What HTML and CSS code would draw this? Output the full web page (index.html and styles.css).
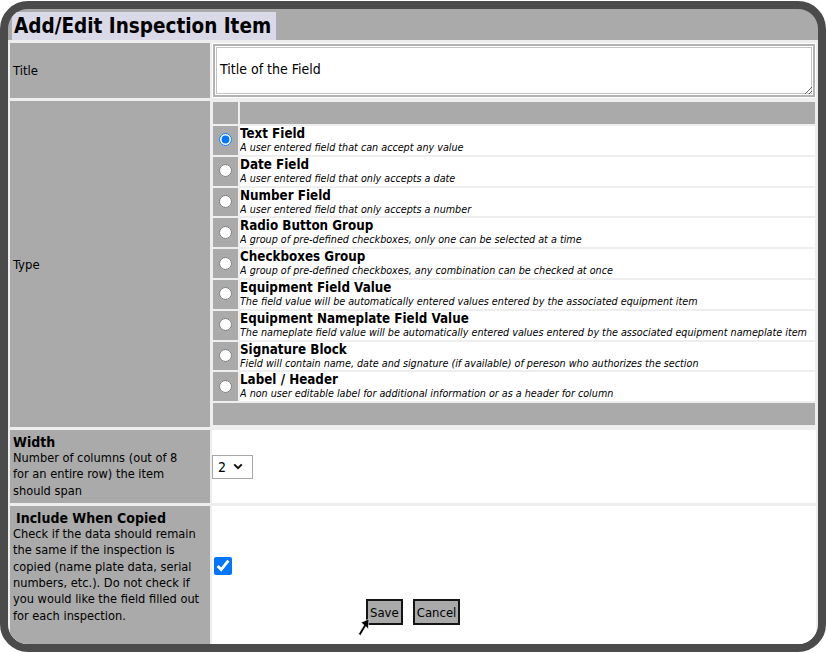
FILE: index.html
```html
<!DOCTYPE html>
<html>
<head>
<meta charset="utf-8">
<title>Add/Edit Inspection Item</title>
<link rel="stylesheet" href="styles.css">
</head>
<body>
<div class="frame">
  <h1 class="heading">Add/Edit Inspection Item</h1>
  <table class="form">
    <tr class="row-title">
      <th class="label">Title</th>
      <td class="value"><textarea class="title-input">Title of the Field</textarea></td>
    </tr>
    <tr class="row-type">
      <th class="label">Type</th>
      <td class="value">
        <table class="types">
          <tr class="bar"><td class="rcell"></td><td class="bar-fill"></td></tr>
          <tr><td class="rcell"><input class="radio" type="radio" name="type" checked></td><td class="opt"><div class="opt-name">Text Field</div><div class="opt-desc">A user entered field that can accept any value</div></td></tr>
          <tr><td class="rcell"><input class="radio" type="radio" name="type"></td><td class="opt"><div class="opt-name">Date Field</div><div class="opt-desc">A user entered field that only accepts a date</div></td></tr>
          <tr><td class="rcell"><input class="radio" type="radio" name="type"></td><td class="opt"><div class="opt-name">Number Field</div><div class="opt-desc">A user entered field that only accepts a number</div></td></tr>
          <tr><td class="rcell"><input class="radio" type="radio" name="type"></td><td class="opt"><div class="opt-name">Radio Button Group</div><div class="opt-desc">A group of pre-defined checkboxes, only one can be selected at a time</div></td></tr>
          <tr><td class="rcell"><input class="radio" type="radio" name="type"></td><td class="opt"><div class="opt-name">Checkboxes Group</div><div class="opt-desc">A group of pre-defined checkboxes, any combination can be checked at once</div></td></tr>
          <tr><td class="rcell"><input class="radio" type="radio" name="type"></td><td class="opt"><div class="opt-name">Equipment Field Value</div><div class="opt-desc">The field value will be automatically entered values entered by the associated equipment item</div></td></tr>
          <tr><td class="rcell"><input class="radio" type="radio" name="type"></td><td class="opt"><div class="opt-name">Equipment Nameplate Field Value</div><div class="opt-desc">The nameplate field value will be automatically entered values entered by the associated equipment nameplate item</div></td></tr>
          <tr><td class="rcell"><input class="radio" type="radio" name="type"></td><td class="opt"><div class="opt-name">Signature Block</div><div class="opt-desc">Field will contain name, date and signature (if available) of pereson who authorizes the section</div></td></tr>
          <tr><td class="rcell"><input class="radio" type="radio" name="type"></td><td class="opt"><div class="opt-name">Label / Header</div><div class="opt-desc">A non user editable label for additional information or as a header for column</div></td></tr>
          <tr class="bar"><td class="bar-fill" colspan="2"></td></tr>
        </table>
      </td>
    </tr>
    <tr class="row-width">
      <th class="label label-block">
        <div class="label-name">Width</div>
        <div class="label-desc">Number of columns (out of 8<br>for an entire row) the item<br>should span</div>
      </th>
      <td class="value value-mid">
        <div class="select"><span class="select-val">2</span><svg class="chev" width="10" height="7" viewBox="0 0 10 7"><path d="M1.2 1.4 L5 5.2 L8.8 1.4" fill="none" stroke="#111" stroke-width="2"/></svg></div>
      </td>
    </tr>
    <tr class="row-copy">
      <th class="label label-top">
        <div class="label-name indent">Include When Copied</div>
        <div class="label-desc">Check if the data should remain<br>the same if the inspection is<br>copied (name plate data, serial<br>numbers, etc.). Do not check if<br>you would like the field filled out<br>for each inspection.</div>
      </th>
      <td class="value value-copy">
        <input class="check" type="checkbox" checked>
        <div class="buttons">
          <button class="btn" type="button">Save</button>
          <button class="btn" type="button">Cancel</button>
        </div>
        <svg class="cursor" width="16" height="19" viewBox="0 0 16 19"><path d="M12 1 L4 4.5 L7 7 L1.5 16 L3.5 17.5 L8.8 8.6 L11.2 11 Z" fill="#000" stroke="#fff" stroke-width="0.6"/></svg>
      </td>
    </tr>
  </table>
</div>
</body>
</html>
```

FILE: styles.css
```css
html, body {
  margin: 0;
  padding: 0;
  background: #ffffff;
}

body {
  font-family: "DejaVu Sans", "Liberation Sans", sans-serif;
  font-stretch: condensed;
  color: #000;
}

.frame {
  box-sizing: border-box;
  width: 826px;
  height: 651px;
  margin-top: 1px;
  border: 8px solid #4b4b4b;
  border-radius: 28px;
  background: #aaaaaa;
  overflow: hidden;
}

.heading {
  width: fit-content;
  margin: 3px 0 0 4px;
  padding: 0 5px 0 2px;
  height: 28px;
  line-height: 28px;
  background: #dad9e7;
  font-size: 20.5px;
  font-weight: bold;
}

.form {
  width: 810px;
  border-collapse: separate;
  border-spacing: 2px 3px;
  background: #eeeeee;
}

.label {
  width: 194px;
  padding: 0 3px;
  background: #aaaaaa;
  text-align: left;
  font-weight: normal;
  font-size: 13px;
  vertical-align: middle;
}

.value {
  background: #ffffff;
  padding: 0;
}

.row-title .label,
.row-title .value {
  height: 55px;
}

.title-input {
  display: block;
  box-sizing: border-box;
  width: 602px;
  height: 53px;
  margin: 0 1px;
  padding: 15px 5px 0;
  border: 2px solid #b2b2b2;
  box-shadow: inset 0 0 0 1px #fff, inset 0 0 0 2px #c4c4c4;
  font-family: inherit;
  font-stretch: condensed;
  font-size: 14px;
  color: #000;
  resize: vertical;
  outline: none;
}

.row-type .value {
  height: 326px;
  vertical-align: top;
}

.types {
  width: calc(100% + 2px);
  margin: -1px 0 0 -1px;
  table-layout: fixed;
  border-collapse: separate;
  border-spacing: 2px 2px;
  background: #eeeeee;
}

.rcell {
  width: 25px;
  padding: 0;
  background: #aaaaaa;
  text-align: center;
  vertical-align: middle;
}

.bar td {
  height: 22px;
  padding: 0;
}

.bar-fill {
  background: #aaaaaa;
}

.radio {
  width: 13px;
  height: 13px;
  margin: 3px 0 0 0;
}

.opt {
  background: #ffffff;
  padding: 0;
  vertical-align: top;
  overflow: hidden;
}

.opt-name {
  font-size: 13.3px;
  font-weight: bold;
  line-height: 15px;
}

.opt-desc {
  font-size: 10.7px;
  font-style: italic;
  line-height: 13.8px;
  white-space: nowrap;
}

.label-block {
  height: 64px;
  padding: 4px 3px;
}

.label-name {
  font-size: 14px;
  font-weight: bold;
  line-height: 16px;
}

.label-name.indent {
  padding-left: 3px;
}

.label-desc {
  font-size: 12.7px;
  line-height: 16.3px;
}

.value-mid {
  vertical-align: middle;
}

.select {
  display: inline-flex;
  align-items: center;
  box-sizing: border-box;
  width: 41px;
  height: 24px;
  margin-left: 0;
  padding: 0 0 0 5px;
  border: 1px solid #a6a6a6;
  background: #fff;
  font-size: 14px;
  vertical-align: middle;
}

.select-val {
  width: 15px;
}

.chev {
  display: block;
}

.label-top {
  vertical-align: top;
  padding-top: 4px;
  height: 134px;
}

.value-copy {
  position: relative;
  vertical-align: top;
  padding: 51px 0 0 2px;
}

.check {
  display: block;
  width: 18px;
  height: 18px;
  margin: 0;
}

.buttons {
  display: flex;
  gap: 10px;
  margin: 24px 0 0 152px;
}

.btn {
  box-sizing: border-box;
  height: 26px;
  padding: 0 2px;
  border: 2px solid #151515;
  border-radius: 0;
  background: #aaaaaa;
  font-family: inherit;
  font-stretch: condensed;
  font-size: 13px;
  color: #000;
}

.cursor {
  position: absolute;
  left: 145px;
  top: 112px;
}
```
